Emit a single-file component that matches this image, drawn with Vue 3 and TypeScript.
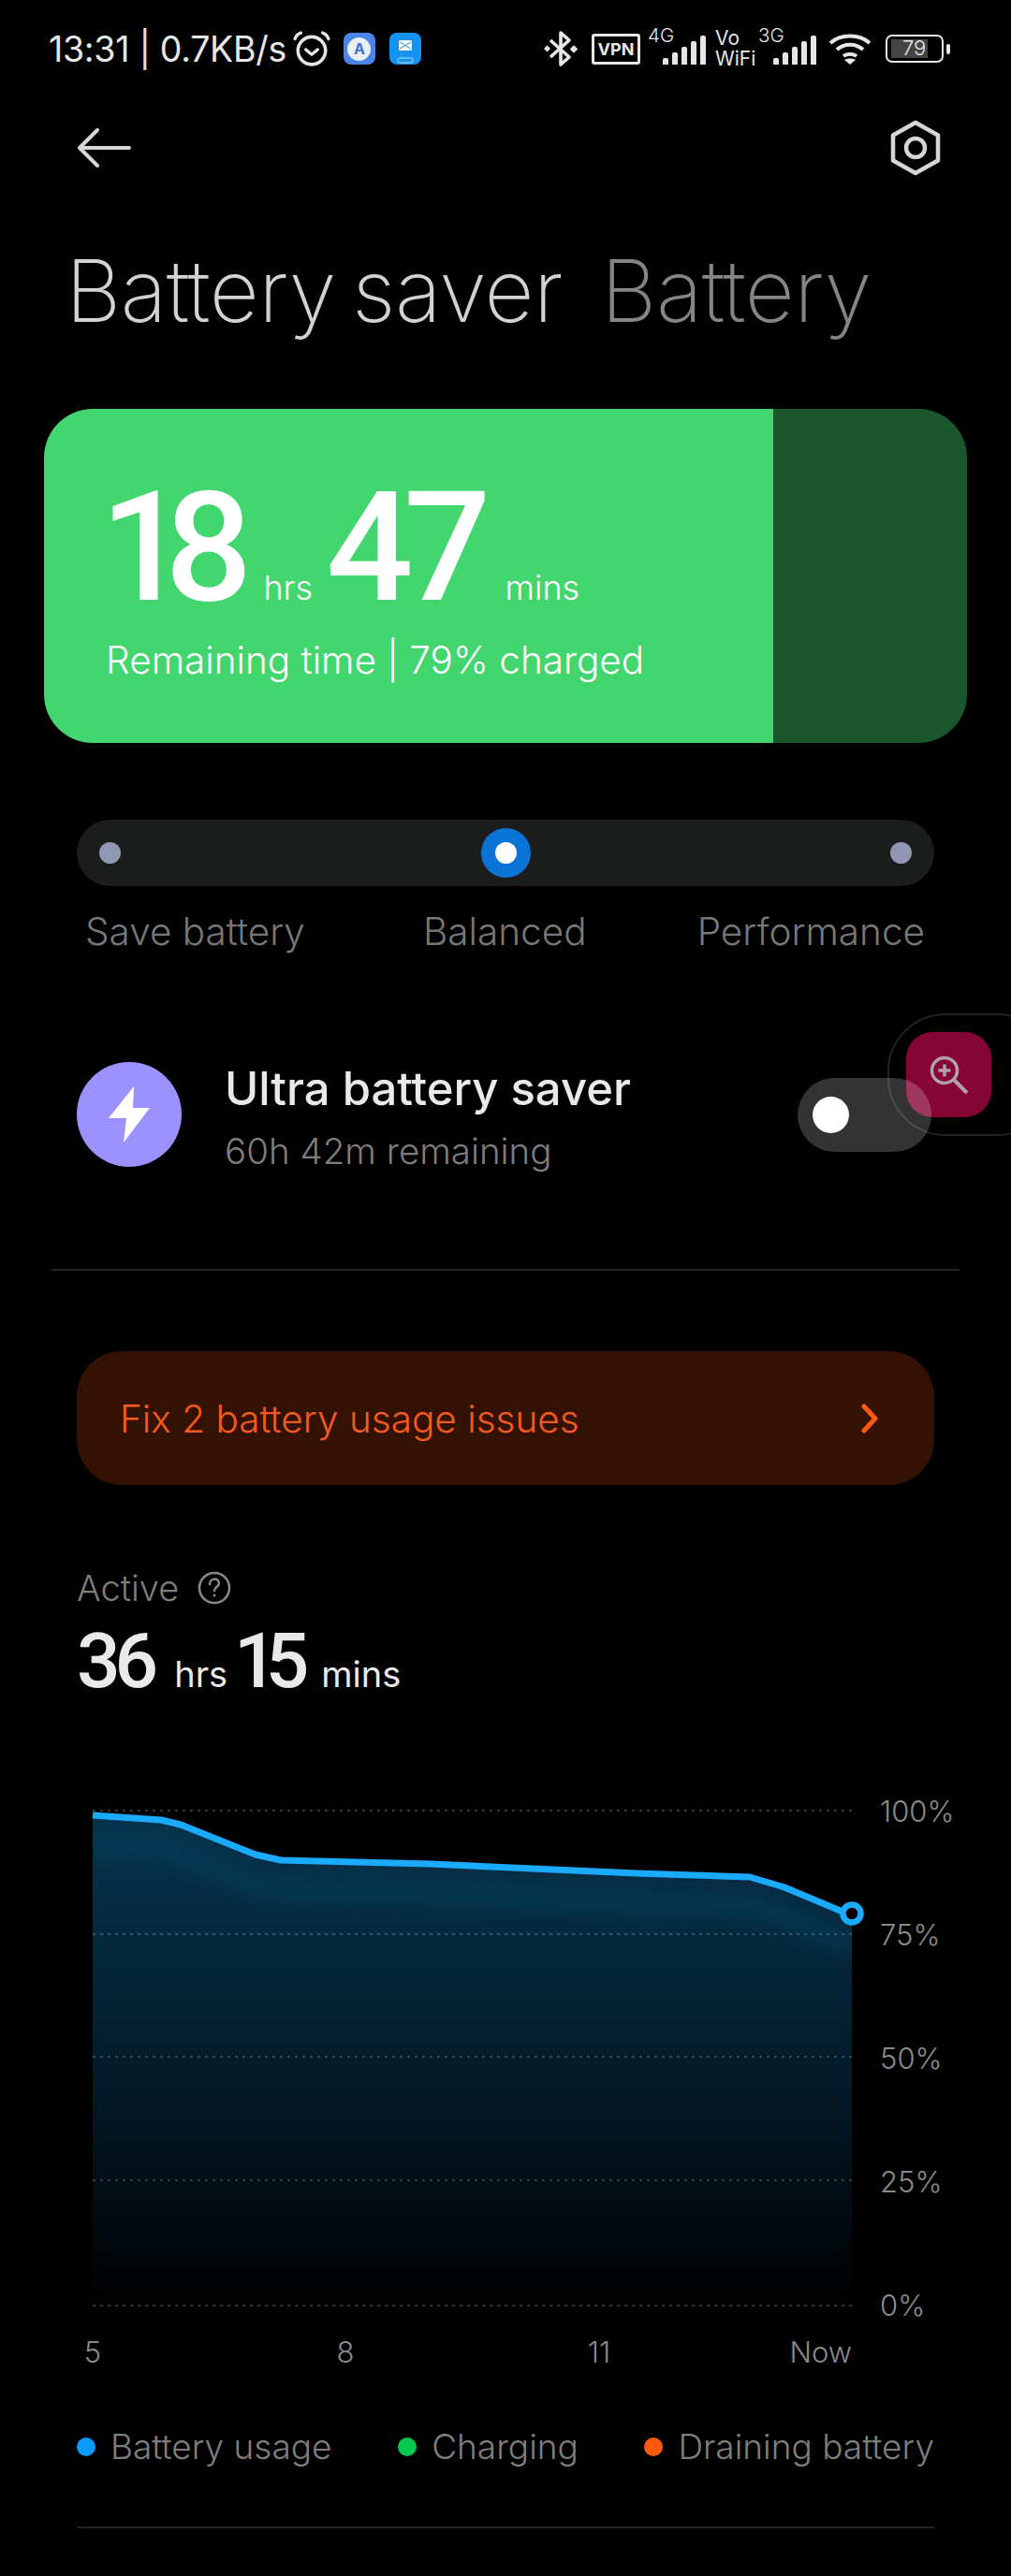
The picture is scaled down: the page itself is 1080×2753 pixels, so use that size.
<script setup lang="ts">
const gridYs = [5, 137, 268, 400, 534]

// battery curve, in chart coordinates (chart starts at x=99, y=1930)
const curve: [number, number][] = [
  [0, 10], [73, 15], [94, 20], [174, 52], [201, 58], [361, 62],
  [581, 72], [702, 76], [739, 87], [801, 113], [811, 115]
]
const linePath = curve.map(([x, y], i) => `${i ? 'L' : 'M'}${x} ${y}`).join(' ')
const areaPath = `${linePath} L811 534 L0 534 Z`
const glowPath = curve.map(([x, y], i) => `${i ? 'L' : 'M'}${x} ${y + 32}`).join(' ')

const yLabels = ['100%', '75%', '50%', '25%', '0%']
const xLabels = ['5', '8', '11', 'Now']

const legend = [
  { label: 'Battery usage', color: '#0a9aff' },
  { label: 'Charging', color: '#05c84f' },
  { label: 'Draining battery', color: '#ff5a0a' }
]

const barHeights = [7, 13, 19, 25, 31]
</script>

<template>
  <div class="page">
    <div class="status">
      <div class="status-left">
        <span class="clock">13:31 | 0.7KB/s</span>
        <svg class="alarm" width="40" height="40" viewBox="0 0 38 38" fill="none" stroke="#e6e6e6" stroke-linecap="round">
          <circle cx="19" cy="21" r="14" stroke-width="3.4" />
          <path d="M13 20l6 5 6-5" stroke-width="3.2" stroke-linejoin="round" />
          <path d="M2 9c1-3 3-5 6-6M36 9c-1-3-3-5-6-6" stroke-width="3.2" />
        </svg>
        <span class="app app-a"><span class="app-a-disc">A</span></span>
        <span class="app app-mail">
          <svg width="34" height="34" viewBox="0 0 34 34" fill="none">
            <rect x="10" y="8" width="14" height="11" rx="1.5" fill="#fff" />
            <path d="M11 10l12 7M23 10l-12 7" stroke="#1c93ee" stroke-width="1" />
            <rect x="9" y="27" width="16" height="5" rx="1.5" stroke="#bfe3ff" stroke-width="1" />
          </svg>
        </span>
      </div>
      <div class="status-right">
        <svg class="bt" width="36" height="40" viewBox="0 0 36 40" fill="none" stroke="#e6e6e6" stroke-width="3.6" stroke-linejoin="round">
          <path d="M7 11l20 18-9 8V3l9 8L7 29" />
          <rect x="1" y="17.500" width="5" height="5" transform="rotate(45 3.5 20)" fill="#e6e6e6" stroke="none" />
          <rect x="29" y="17.500" width="6" height="6" transform="rotate(45 32 20.5)" fill="#e6e6e6" stroke="none" />
        </svg>
        <span class="vpn">VPN</span>
        <div class="signal">
          <span class="net-label">4G</span>
          <div class="bars">
            <i v-for="h in barHeights" :key="h" :style="{ height: h + 'px' }"></i>
          </div>
        </div>
        <div class="vowifi"><span>Vo</span><span>WiFi</span></div>
        <div class="signal signal-3g">
          <span class="net-label">3G</span>
          <div class="bars">
            <i v-for="h in barHeights" :key="h" :style="{ height: h + 'px' }"></i>
          </div>
        </div>
        <svg class="wifi" width="46" height="34" viewBox="0 0 46 34" fill="none" stroke="#e6e6e6" stroke-width="4">
          <path d="M2 11C13 1 33 1 44 11" />
          <path d="M9 18c8-7 20-7 28 0" />
          <path d="M16 25c4-3 10-3 14 0" />
          <path d="M23 34l-6-5c3-2 9-2 12 0z" fill="#e6e6e6" stroke="none" />
        </svg>
        <div class="battery">
          <div class="battery-shell">
            <div class="battery-fill"></div>
            <span class="battery-num">79</span>
          </div>
          <span class="battery-cap"></span>
        </div>
      </div>
    </div>

    <div class="topbar">
      <svg width="58" height="42" viewBox="0 0 58 42" fill="none" stroke="#d6d6d6" stroke-width="4" stroke-linecap="round" stroke-linejoin="round">
        <path d="M56 21H3M22 2L3 21l19 19" />
      </svg>
      <svg width="56" height="60" viewBox="0 0 56 60" fill="none" stroke="#d6d6d6" stroke-width="4.5" stroke-linejoin="round">
        <path d="M28 3l24 13.500v27L28 57 4 43.500v-27z" />
        <circle cx="28" cy="30" r="10" />
      </svg>
    </div>

    <div class="title">
      <span>Battery saver</span>
      <span class="title-dim">Battery</span>
    </div>

    <div class="remain-card">
      <div class="remain-fill">
        <div class="remain-time">
          <span class="big big-hours">18</span><span class="unit unit-hrs">hrs</span>
          <span class="big">47</span><span class="unit unit-mins">mins</span>
        </div>
        <div class="remain-sub">Remaining time | 79% charged</div>
      </div>
      <div class="remain-rest"></div>
    </div>

    <div class="mode-track">
      <span class="mode-dot"></span>
      <span class="mode-active"><i></i></span>
      <span class="mode-dot"></span>
    </div>
    <div class="mode-labels">
      <span>Save battery</span>
      <span class="mode-mid">Balanced</span>
      <span>Performance</span>
    </div>

    <div class="ultra">
      <div class="ultra-icon">
        <svg width="46" height="60" viewBox="0 0 46 60" fill="#fff">
          <path d="M28 0L1 34h19l-3 26 28-37H27z" />
        </svg>
      </div>
      <div class="ultra-text">
        <div class="ultra-title">Ultra battery saver</div>
        <div class="ultra-sub">60h 42m remaining</div>
      </div>
      <div class="toggle"><span></span></div>
    </div>

    <div class="divider divider-wide"></div>

    <div class="fix">
      <span class="fix-text">Fix 2 battery usage issues</span>
      <svg width="18" height="32" viewBox="0 0 18 32" fill="none" stroke="#ff5a0a" stroke-width="5" stroke-linecap="round" stroke-linejoin="round">
        <path d="M3 3l12 13L3 29" />
      </svg>
    </div>

    <div class="active-label">
      <span>Active</span>
      <svg width="36" height="36" viewBox="0 0 36 36" fill="none" stroke="#8a8a8a" stroke-width="2.500">
        <circle cx="18" cy="18" r="16" />
        <path d="M13 14c0-7 10-7 10-1 0 4-5 4-5 8" stroke-linecap="round" />
        <circle cx="18" cy="26" r="1.500" fill="#8a8a8a" stroke="none" />
      </svg>
    </div>
    <div class="active-time">
      <span class="mid mid-hours">36</span><span class="mid-unit mid-hrs">hrs</span>
      <span class="mid mid-mins">15</span><span class="mid-unit mid-min">mins</span>
    </div>

    <div class="chart">
      <div class="chart-plot">
        <svg width="811" height="540" viewBox="0 0 811 540" class="chart-svg">
          <defs>
            <linearGradient id="areaFill" x1="0" y1="0" x2="0" y2="1">
              <stop offset="0" stop-color="#06344d" />
              <stop offset="0.55" stop-color="#031a28" />
              <stop offset="1" stop-color="#000" />
            </linearGradient>
            <clipPath id="areaClip"><path :d="areaPath" /></clipPath>
            <filter id="soft" x="-5%" y="-20%" width="110%" height="140%">
              <feGaussianBlur stdDeviation="9" />
            </filter>
          </defs>
          <path :d="areaPath" fill="url(#areaFill)" />
          <g clip-path="url(#areaClip)">
            <path :d="glowPath" fill="none" stroke="#0b4866" stroke-opacity="0.45" stroke-width="22" filter="url(#soft)" />
          </g>
          <line
            v-for="y in gridYs"
            :key="y"
            x1="0"
            x2="811"
            :y1="y"
            :y2="y"
            stroke="#9fb3bd"
            stroke-opacity="0.3"
            stroke-width="2"
            stroke-dasharray="3 5"
          />
          <path :d="linePath" fill="none" stroke="#1aabff" stroke-width="7" stroke-linejoin="round" />
          <circle cx="811" cy="115" r="9.500" fill="#000" stroke="#1aabff" stroke-width="6.500" />
        </svg>
        <div class="x-labels">
          <span v-for="x in xLabels" :key="x">{{ x }}</span>
        </div>
      </div>
      <div class="y-labels">
        <span v-for="y in yLabels" :key="y">{{ y }}</span>
      </div>
    </div>

    <div class="legend">
      <div v-for="item in legend" :key="item.label" class="legend-item">
        <i :style="{ background: item.color }"></i>
        <span>{{ item.label }}</span>
      </div>
    </div>

    <div class="divider divider-narrow"></div>

    <div class="float-tool">
      <div class="float-btn">
        <svg width="42" height="42" viewBox="0 0 42 42" fill="none" stroke="#b4a0ab" stroke-width="3.500">
          <circle cx="16" cy="16" r="13.500" />
          <path d="M26 26l14 14" stroke-width="4" />
          <path d="M16 9.500v13M9.500 16h13" stroke-width="3.500" />
        </svg>
      </div>
    </div>
  </div>
</template>

<style>
html,
body {
  margin: 0;
  background: #000;
}
</style>

<style scoped>
.page {
  position: relative;
  width: 1080px;
  height: 2753px;
  overflow: hidden;
  background: #000;
  color: #fff;
  font-family: Inter, "Noto Sans", sans-serif;
}

.status {
  display: flex;
  justify-content: space-between;
  align-items: center;
  height: 40px;
  padding: 32px 65px 0 52px;
}

.status-left,
.status-right {
  display: flex;
  align-items: center;
}

.clock {
  font-size: 37.500px;
  color: #e6e6e6;
  letter-spacing: -0.3px;
  white-space: nowrap;
}

.alarm {
  margin-left: 7px;
}

.app {
  display: flex;
  align-items: center;
  justify-content: center;
  width: 34px;
  height: 34px;
  border-radius: 8px;
}

.app-a {
  margin-left: 14px;
  background: #4a86e8;
}

.app-a-disc {
  display: flex;
  align-items: center;
  justify-content: center;
  width: 25px;
  height: 25px;
  border-radius: 50%;
  background: #e9edf4;
  color: #3f73d6;
  font-size: 16px;
  font-weight: 700;
}

.app-mail {
  margin-left: 15px;
  background: #1494f2;
}

.bt {
  margin-right: 15px;
}

.vpn {
  display: flex;
  align-items: center;
  justify-content: center;
  box-sizing: border-box;
  width: 52px;
  height: 33px;
  border: 3px solid #e6e6e6;
  border-radius: 3px;
  color: #e6e6e6;
  font-size: 18px;
  font-weight: 700;
}

.signal {
  position: relative;
  width: 62px;
  height: 40px;
  margin-left: 8px;
}

.signal-3g {
  margin-left: 4px;
}

.net-label {
  position: absolute;
  left: 0;
  top: -7px;
  color: #e6e6e6;
  font-size: 20.500px;
  font-weight: 300;
}

.bars {
  position: absolute;
  right: 0;
  bottom: 3px;
  display: flex;
  align-items: flex-end;
  gap: 4px;
}

.bars i {
  display: block;
  width: 6px;
  border-radius: 2px 2px 0 0;
  background: #e6e6e6;
}

.vowifi {
  display: flex;
  flex-direction: column;
  align-items: flex-start;
  width: 42px;
  margin-left: 10px;
  color: #e6e6e6;
  font-size: 21px;
  line-height: 22px;
}

.wifi {
  margin-left: 13px;
}

.battery {
  display: flex;
  align-items: center;
  gap: 3px;
  margin-left: 15px;
}

.battery-shell {
  position: relative;
  box-sizing: border-box;
  width: 62px;
  height: 30px;
  border: 2.500px solid #e6e6e6;
  border-radius: 7px;
  overflow: hidden;
}

.battery-fill {
  position: absolute;
  left: 4px;
  top: 3px;
  bottom: 3px;
  width: 39px;
  background: #444;
}

.battery-num {
  position: relative;
  display: block;
  padding-left: 16px;
  color: #e6e6e6;
  font-size: 22px;
  font-weight: 300;
  line-height: 25px;
}

.battery-cap {
  width: 4px;
  height: 11px;
  border-radius: 2px;
  background: #e6e6e6;
}

.topbar {
  display: flex;
  justify-content: space-between;
  align-items: center;
  padding: 56px 74px 0 82px;
}

.title {
  display: flex;
  gap: 41px;
  margin-top: 67px;
  padding-left: 70px;
  color: #d2d2d2;
  font-size: 92px;
  font-weight: 200;
  letter-spacing: -0.5px;
  word-spacing: -8px;
  line-height: 112px;
  white-space: nowrap;
}

.title-dim {
  color: #858585;
}

.remain-card {
  display: flex;
  width: 986px;
  height: 357px;
  margin: 70px 0 0 47px;
  border-radius: 52px;
  overflow: hidden;
}

.remain-fill {
  box-sizing: border-box;
  width: 779px;
  padding: 83px 0 0 66px;
  background: #43d66e;
}

.remain-rest {
  flex: 1;
  background: #1a572d;
}

.remain-time {
  display: flex;
  align-items: baseline;
  height: 130px;
}

.big {
  font-family: Roboto, Inter, sans-serif;
  font-size: 164px;
  font-weight: 500;
  line-height: 130px;
  letter-spacing: -10px;
}

.big-hours {
  margin-left: -6px;
  letter-spacing: -24px;
}

.unit {
  font-size: 36px;
  font-weight: 300;
}

.unit-hrs {
  margin: 0 14px 0 36px;
}

.unit-mins {
  margin-left: 25px;
}

.remain-sub {
  margin-top: 32px;
  font-size: 40.500px;
  font-weight: 300;
  line-height: 48px;
  white-space: nowrap;
}

.mode-track {
  display: flex;
  justify-content: space-between;
  align-items: center;
  box-sizing: border-box;
  width: 916px;
  height: 71px;
  margin: 82px 0 0 82px;
  padding: 0 24px;
  border-radius: 36px;
  background: #1b1d1d;
}

.mode-dot {
  width: 23px;
  height: 23px;
  border-radius: 50%;
  background: #9296b5;
}

.mode-active {
  display: flex;
  align-items: center;
  justify-content: center;
  width: 53px;
  height: 53px;
  border-radius: 50%;
  background: #0a74d6;
}

.mode-active i {
  display: block;
  width: 23px;
  height: 23px;
  border-radius: 50%;
  background: #fff;
}

.mode-labels {
  display: flex;
  justify-content: space-between;
  margin-top: 22px;
  padding: 0 92px 0 91px;
  color: #777;
  font-size: 40.500px;
  font-weight: 300;
  line-height: 54px;
}

.mode-mid {
  margin-left: 8px;
}

.ultra {
  position: relative;
  display: flex;
  align-items: center;
  margin-top: 112px;
  padding: 0 85px 0 82px;
  height: 112px;
}

.ultra-icon {
  display: flex;
  align-items: center;
  justify-content: center;
  flex: none;
  width: 112px;
  height: 112px;
  border-radius: 50%;
  background: #9c92ff;
}

.ultra-text {
  flex: 1;
  margin-left: 46px;
  padding-top: 5px;
}

.ultra-title {
  color: #e9e9e9;
  font-size: 49px;
  font-weight: 500;
  line-height: 60px;
}

.ultra-sub {
  margin-top: 12px;
  color: #7d7d7d;
  font-size: 38.500px;
  line-height: 48px;
  font-weight: 300;
}

.toggle {
  position: relative;
  z-index: 2;
  display: flex;
  align-items: center;
  box-sizing: border-box;
  width: 143px;
  height: 79px;
  padding-left: 16px;
  border-radius: 40px;
  background: rgba(255, 255, 255, 0.2);
}

.toggle span {
  width: 39px;
  height: 39px;
  border-radius: 50%;
  background: #fff;
}

.divider {
  height: 2px;
  background: #222;
}

.divider-wide {
  margin: 109px 55px 0;
}

.divider-narrow {
  margin: 60px 82px 0;
}

.fix {
  display: flex;
  justify-content: space-between;
  align-items: center;
  box-sizing: border-box;
  width: 916px;
  height: 143px;
  margin: 86px 0 0 82px;
  padding: 0 60px 0 46px;
  border-radius: 48px;
  background: #331203;
  color: #f35a1c;
  font-size: 40.500px;
  font-weight: 300;
}

.fix-text {
  padding-top: 2px;
}

.active-label {
  display: flex;
  align-items: center;
  gap: 20px;
  margin: 88px 0 0 82px;
  height: 44px;
  color: #7e7e7e;
  font-size: 38px;
  font-weight: 300;
}

.active-time {
  display: flex;
  align-items: baseline;
  margin: 16px 0 0 82px;
  height: 80px;
  color: #e9e9e9;
}

.mid {
  font-family: Roboto, Inter, sans-serif;
  font-size: 82px;
  font-weight: 500;
  line-height: 80px;
}

.mid-hours {
  letter-spacing: -6px;
}

.mid-mins {
  letter-spacing: -13px;
}

.mid-unit {
  font-size: 38px;
  font-weight: 400;
}

.mid-hrs {
  margin: 0 7px 0 23px;
}

.mid-min {
  margin-left: 26px;
}

.chart {
  display: flex;
  margin: 115px 0 0 99px;
}

.chart-plot {
  width: 811px;
}

.chart-svg {
  display: block;
  overflow: visible;
}

.x-labels {
  display: grid;
  grid-template-columns: 270px 271px 270px 0;
  margin-top: 19px;
  color: #8a8a8a;
  font-size: 31px;
  font-weight: 300;
  line-height: 50px;
}

.x-labels span {
  width: 80px;
  margin-left: -40px;
  text-align: center;
}

.x-labels span:last-child {
  margin-left: -80px;
  text-align: right;
}

.y-labels {
  display: flex;
  flex-direction: column;
  justify-content: space-between;
  height: 576px;
  margin: -18px 0 0 30px;
  color: #8a8a8a;
  font-size: 31px;
  font-weight: 300;
  line-height: 48px;
}

.legend {
  display: flex;
  justify-content: space-between;
  margin: 51px 82px 0;
}

.legend-item {
  display: flex;
  align-items: center;
  gap: 16px;
  color: #7e7e7e;
  font-size: 37px;
  font-weight: 300;
  line-height: 50px;
}

.legend-item i {
  display: block;
  width: 20px;
  height: 20px;
  border-radius: 50%;
}

.float-tool {
  position: absolute;
  left: 948px;
  top: 1083px;
  display: flex;
  align-items: center;
  box-sizing: border-box;
  width: 180px;
  height: 131px;
  padding-left: 18px;
  border: 2px solid #222;
  border-radius: 62px;
}

.float-btn {
  display: flex;
  align-items: center;
  justify-content: center;
  width: 91px;
  height: 91px;
  border-radius: 28px;
  background: #850535;
}
</style>
